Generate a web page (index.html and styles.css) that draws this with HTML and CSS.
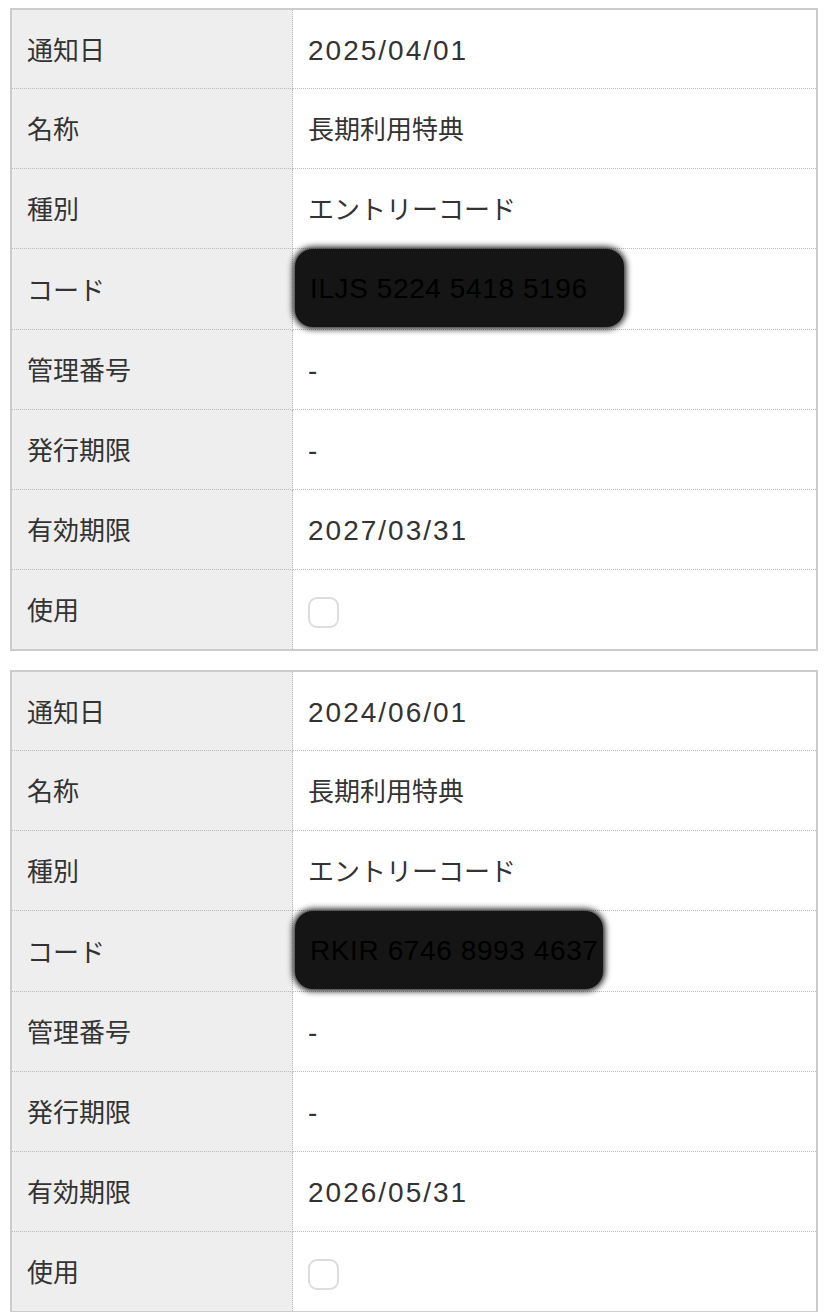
FILE: index.html
```html
<!DOCTYPE html>
<html lang="ja">
<head>
    <meta charset="UTF-8">
    <meta name="viewport" content="width=device-width, initial-scale=1.0">
    <title>特典一覧</title>
    <link rel="stylesheet" href="styles.css">
</head>
<body>
<table class="coupon">
    <tr><th>通知日</th><td><span class="num">2025/04/01</span></td></tr>
    <tr><th>名称</th><td>長期利用特典</td></tr>
    <tr><th>種別</th><td>エントリーコード</td></tr>
    <tr><th>コード</th><td class="code"><span class="redact redact-a"><span class="num">ILJS 5224 5418 5196</span></span></td></tr>
    <tr><th>管理番号</th><td><span class="num">-</span></td></tr>
    <tr><th>発行期限</th><td><span class="num">-</span></td></tr>
    <tr><th>有効期限</th><td><span class="num">2027/03/31</span></td></tr>
    <tr><th>使用</th><td><input type="checkbox" class="used"></td></tr>
</table>
<table class="coupon">
    <tr><th>通知日</th><td><span class="num">2024/06/01</span></td></tr>
    <tr><th>名称</th><td>長期利用特典</td></tr>
    <tr><th>種別</th><td>エントリーコード</td></tr>
    <tr><th>コード</th><td class="code"><span class="redact redact-b"><span class="num">RKIR 6746 8993 4637</span></span></td></tr>
    <tr><th>管理番号</th><td><span class="num">-</span></td></tr>
    <tr><th>発行期限</th><td><span class="num">-</span></td></tr>
    <tr><th>有効期限</th><td><span class="num">2026/05/31</span></td></tr>
    <tr><th>使用</th><td><input type="checkbox" class="used"></td></tr>
</table>
</body>
</html>
```

FILE: styles.css
```css
body {
    font-family: 'Noto Sans CJK JP', 'Noto Sans', sans-serif;
    margin: 8px 10px;
    background: #ffffff;
    color: #333;
}
.coupon {
    width: 808px;
    border-collapse: separate;
    border-spacing: 0;
    border: 2px solid #cccccc;
    margin-bottom: 19px;
    font-size: 26px;
}
.coupon th,
.coupon td {
    height: 80px;
    padding: 0 0 2px 15px;
    border-bottom: 1px dotted #bbbbbb;
    text-align: left;
    vertical-align: middle;
    font-weight: 400;
    box-sizing: border-box;
}
.coupon tr:first-child th,
.coupon tr:first-child td {
    height: 79px;
}
.coupon tr:last-child th,
.coupon tr:last-child td {
    border-bottom: none;
    height: 79px;
}
.coupon th {
    width: 281px;
    background: #eeeeee;
    border-right: 1px dotted #bbbbbb;
}
.coupon td {
    background: #ffffff;
}
.num {
    font-family: 'Liberation Sans', 'Arial', sans-serif;
    font-size: 28px;
    letter-spacing: 2px;
}
.coupon td.code {
    padding-left: 0;
}
.redact {
    display: inline-block;
    background: #151515;
    color: #000;
    border-radius: 18px;
    padding: 22px 0 22px 15px;
    box-shadow: 0 0 6px 2px #151515;
    margin-left: 2px;
    line-height: 32px;
}
.redact .num {
    letter-spacing: 0.6px;
}
.redact-a {
    padding-right: 36px;
}
.redact-b {
    padding-right: 4px;
}
.used {
    appearance: none;
    -webkit-appearance: none;
    width: 31px;
    height: 31px;
    margin: 2px 0 0 0;
    border: 2px solid #dddddd;
    border-radius: 9px;
    background: #fff;
    vertical-align: middle;
    box-sizing: border-box;
}
```
